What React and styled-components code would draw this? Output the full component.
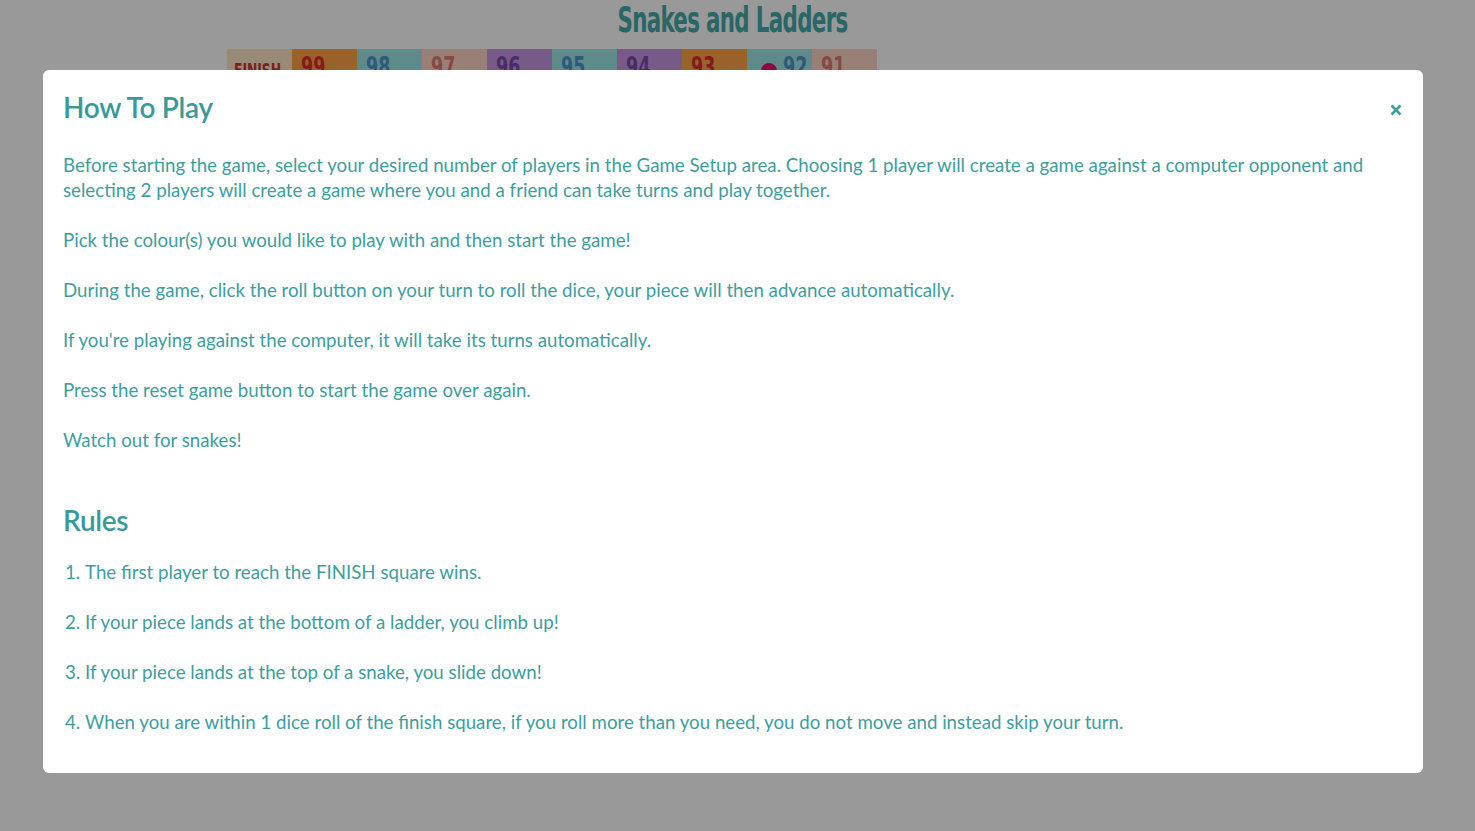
import React from "react";
import styled, { createGlobalStyle } from "styled-components";

const GlobalStyle = createGlobalStyle`
  html, body { margin: 0; padding: 0; }
  body {
    background: #fff;
    font-family: Lato, "Open Sans", sans-serif;
    overflow: hidden;
  }
`;

// page behind the dialog
const Page = styled.div`
  width: 1475px;
  height: 831px;
  background: #fff;
`;

const Title = styled.h1`
  margin: 0 0 0 -10px;
  text-align: center;
  font-family: "Liberation Sans Narrow", "DejaVu Sans Condensed", sans-serif;
  font-weight: 700;
  font-size: 36px;
  line-height: 40px;
  color: #45aaaa;
  letter-spacing: -1px;
  transform: scaleX(0.66);
`;

const Board = styled.div`
  margin: 9px 0 0 227px;
  display: grid;
  grid-template-columns: repeat(10, 65px);
  width: 650px;
`;

const Cell = styled.div`
  position: relative;
  height: 65px;
  background: ${(p) => p.bg};
  color: ${(p) => p.fg};
  font-family: "Liberation Sans Narrow", "DejaVu Sans Condensed", sans-serif;
  font-weight: 700;
  font-size: ${(p) => (p.small ? "19px" : "27px")};
  padding: ${(p) => (p.small ? "10px 0 0 7px" : "2px 0 0 9px")};
  padding-left: ${(p) => (p.right ? "36px" : p.small ? "7px" : "9px")};
  box-sizing: border-box;
  white-space: nowrap;
`;

const Num = styled.span`
  display: inline-block;
  transform: scaleX(0.72);
  transform-origin: left center;
`;

const Piece = styled.span`
  position: absolute;
  left: 14px;
  top: 14px;
  width: 16px;
  height: 16px;
  border-radius: 50%;
  background: #e8106a;
`;

const Backdrop = styled.div`
  position: fixed;
  inset: 0;
  background: rgba(0, 0, 0, 0.4);
`;

const Modal = styled.div`
  position: fixed;
  left: 43px;
  top: 70px;
  width: 1380px;
  box-sizing: border-box;
  background: #fff;
  border-radius: 6px;
  padding: 20px 20px 38px;
  color: #3d9e9e;
`;

const Header = styled.div`
  display: flex;
  justify-content: space-between;
  align-items: center;
  margin-bottom: 29px;
`;

const Heading = styled.h2`
  margin: 0;
  font-size: 28px;
  line-height: 34px;
  font-weight: 600;
  color: #3a9999;
  letter-spacing: -0.3px;
`;

const Close = styled.button`
  border: 0;
  background: none;
  padding: 0;
  margin: 6px 1px 0 0;
  display: flex;
  cursor: pointer;
`;

const Para = styled.p`
  margin: 0 0 ${(p) => (p.last ? "0" : "25px")};
  font-size: 18.7px;
  line-height: 25px;
`;

const RulesHeading = styled(Heading)`
  margin-top: 50px;
  margin-bottom: 23px;
`;

const RuleList = styled.ol`
  margin: 0;
  padding: 0 0 0 2px;
  list-style-position: inside;
`;

const Rule = styled.li`
  font-size: 18.7px;
  line-height: 25px;
  margin-bottom: 25px;
  &:last-child { margin-bottom: 0; }
`;

const cells = [
  { t: "FINISH", bg: "#ffe7c9", fg: "#c43a3a", small: true },
  { t: "99", bg: "#ffa347", fg: "#e02a2a" },
  { t: "98", bg: "#9ee6e6", fg: "#5291cc" },
  { t: "97", bg: "#ffd5c5", fg: "#e07a70" },
  { t: "96", bg: "#c896e0", fg: "#7a4aaa" },
  { t: "95", bg: "#9ee6e6", fg: "#5291cc" },
  { t: "94", bg: "#c896e0", fg: "#7a4aaa" },
  { t: "93", bg: "#ffa347", fg: "#e02a2a" },
  { t: "92", bg: "#9ee6e6", fg: "#5291cc", piece: true, right: true },
  { t: "91", bg: "#ffd5c5", fg: "#e07a70" },
];

export default function App() {
  return (
    <>
      <GlobalStyle />
      <Page>
        <Title>Snakes and Ladders</Title>
        <Board>
          {cells.map((c) => (
            <Cell key={c.t} bg={c.bg} fg={c.fg} small={c.small} right={c.right}>
              {c.piece && <Piece />}
              <Num>{c.t}</Num>
            </Cell>
          ))}
        </Board>
      </Page>
      <Backdrop />
      <Modal>
        <Header>
          <Heading>How To Play</Heading>
          <Close aria-label="Close">
            <svg width="12" height="12" viewBox="0 0 12 12">
              <path d="M1.5 1.5L10.5 10.5M10.5 1.5L1.5 10.5" stroke="#3d9e9e" strokeWidth="2.6" />
            </svg>
          </Close>
        </Header>
        <Para>
          Before starting the game, select your desired number of players in the Game Setup area. Choosing 1 player will create a game against a computer opponent and selecting 2 players will create a game where you and a friend can take turns and play together.
        </Para>
        <Para>Pick the colour(s) you would like to play with and then start the game!</Para>
        <Para>During the game, click the roll button on your turn to roll the dice, your piece will then advance automatically.</Para>
        <Para>If you're playing against the computer, it will take its turns automatically.</Para>
        <Para>Press the reset game button to start the game over again.</Para>
        <Para last>Watch out for snakes!</Para>
        <RulesHeading>Rules</RulesHeading>
        <RuleList>
          <Rule>The first player to reach the FINISH square wins.</Rule>
          <Rule>If your piece lands at the bottom of a ladder, you climb up!</Rule>
          <Rule>If your piece lands at the top of a snake, you slide down!</Rule>
          <Rule>When you are within 1 dice roll of the finish square, if you roll more than you need, you do not move and instead skip your turn.</Rule>
        </RuleList>
      </Modal>
    </>
  );
}
